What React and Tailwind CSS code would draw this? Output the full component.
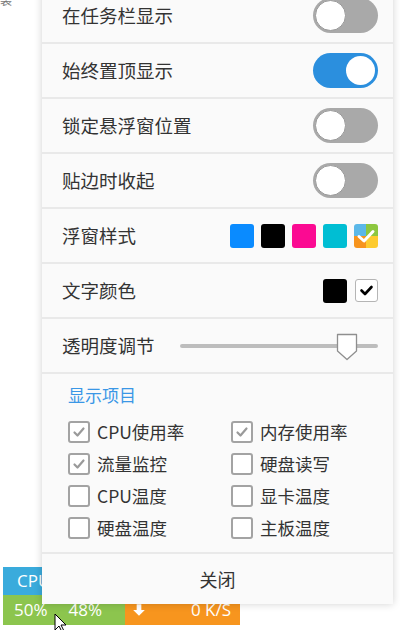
import React from "react";

const font = { fontFamily: '"Noto Sans CJK SC", "Noto Sans", sans-serif' };

function Toggle({ on }) {
  return on ? (
    <div className="w-[65px] h-[35px] rounded-full bg-[#2b8fde] p-[3px] flex justify-end">
      <div className="w-[29px] h-[29px] rounded-full bg-white" />
    </div>
  ) : (
    <div className="w-[65px] h-[35px] rounded-full bg-[#a9a9a9] p-[2px] flex justify-start">
      <div className="w-[31px] h-[31px] rounded-full bg-white border border-[#9a9a9a]" />
    </div>
  );
}

function Row({ label, children }) {
  return (
    <div className="h-[55px] border-b-2 border-[#e9e9e9] flex items-center justify-between pl-[20px] pr-[15px]">
      <span className="text-[18.5px] text-[#333]" style={font}>{label}</span>
      {children}
    </div>
  );
}

function Check({ checked, label }) {
  return (
    <div className="flex items-center gap-[7px] h-[32px]">
      <div className="w-[22px] h-[22px] border-2 border-[#a3a3a3] rounded-[3px] bg-white flex items-center justify-center">
        {checked && (
          <svg width="14" height="14" viewBox="0 0 14 14">
            <polyline points="2.5,7.5 5.5,10.5 11.5,3.5" fill="none" stroke="#9a9a9a" strokeWidth="2.2" strokeLinecap="round" strokeLinejoin="round" />
          </svg>
        )}
      </div>
      <span className="text-[17.5px] text-[#333] leading-none" style={font}>{label}</span>
    </div>
  );
}

export default function App() {
  return (
    <div className="relative w-[400px] h-[630px] overflow-hidden bg-white">
      <span className="absolute left-0 top-[-9px] text-[12px] text-[#777]" style={font}>袋</span>

      {/* floating monitor widget behind */}
      <div className="absolute left-[3px] top-[567px] w-[237px] flex flex-col text-white" style={{ fontFamily: '"Open Sans", sans-serif' }}>
        <div className="h-[28px] bg-[#3aabdc] flex items-center pl-[14px] text-[17px]">CPU</div>
        <div className="h-[30px] flex text-[17px]">
          <div className="w-[122px] bg-[#8cc54e] flex items-center pl-[11px] gap-[21px]">
            <span>50%</span>
            <span>48%</span>
          </div>
          <div className="flex-1 bg-[#f7951e] flex items-center justify-between pl-[7px] pr-[9px]">
            <svg width="14" height="14" viewBox="0 0 12 12">
              <path d="M4 1 H8 V6 H11 L6 11 L1 6 H4 Z" fill="white" />
            </svg>
            <span>0 K/S</span>
          </div>
        </div>
      </div>
      <svg className="absolute left-[54px] top-[613px]" width="14" height="20" viewBox="0 0 14 20">
        <path d="M1 1 L1 17 L5 13 L8 19 L10 18 L7 12 L12 12 Z" fill="white" stroke="black" strokeWidth="1" strokeLinejoin="round" />
      </svg>

      {/* settings panel */}
      <div className="absolute left-[42px] top-[-11px] w-[351px] bg-[#fafafa] shadow-[0_0_8px_rgba(0,0,0,0.18)]">
        <Row label="在任务栏显示"><Toggle on={false} /></Row>
        <Row label="始终置顶显示"><Toggle on={true} /></Row>
        <Row label="锁定悬浮窗位置"><Toggle on={false} /></Row>
        <Row label="贴边时收起"><Toggle on={false} /></Row>
        <Row label="浮窗样式">
          <div className="flex gap-[7px]">
            <div className="w-[24px] h-[24px] rounded-[3px] bg-[#0a8bff]" />
            <div className="w-[24px] h-[24px] rounded-[3px] bg-black" />
            <div className="w-[24px] h-[24px] rounded-[3px] bg-[#fb0a92]" />
            <div className="w-[24px] h-[24px] rounded-[3px] bg-[#00bed3]" />
            <div className="relative w-[24px] h-[24px] rounded-[3px] overflow-hidden grid grid-cols-2 grid-rows-2">
              <div className="bg-[#5bb8e8]" />
              <div className="bg-[#8dc73f]" />
              <div className="bg-[#f7941d]" />
              <div className="bg-[#fdcb2e]" />
              <svg className="absolute left-0 top-0" width="24" height="24" viewBox="0 0 24 24">
                <polyline points="5,12.5 10,17 19,7.5" fill="none" stroke="white" strokeWidth="3" strokeLinecap="round" strokeLinejoin="round" />
              </svg>
            </div>
          </div>
        </Row>
        <Row label="文字颜色">
          <div className="flex gap-[8px]">
            <div className="w-[24px] h-[24px] rounded-[3px] bg-black" />
            <div className="w-[23px] h-[23px] rounded-[3px] bg-white border border-[#b5b5b5] flex items-center justify-center">
              <svg width="15" height="15" viewBox="0 0 15 15">
                <polyline points="2.5,7.5 6,11 12.5,4" fill="none" stroke="black" strokeWidth="2.6" strokeLinecap="round" strokeLinejoin="round" />
              </svg>
            </div>
          </div>
        </Row>
        <Row label="透明度调节">
          <div className="relative w-[198px] h-[28px] flex items-center">
            <div className="w-full h-[4px] rounded-full bg-[#bdbdbd]" />
            <svg className="absolute left-[156px] top-[1px]" width="22" height="28" viewBox="0 0 22 28">
              <path d="M1.5 1.5 H20.5 V18 L11 26.5 L1.5 18 Z" fill="white" stroke="#8f8f8f" strokeWidth="1.3" strokeLinejoin="round" />
            </svg>
          </div>
        </Row>
        <div className="pl-[26px] pt-[12px] pb-[8px] border-b-2 border-[#e9e9e9]">
          <div className="text-[17px] text-[#3a97e6] leading-none mb-[13px]" style={font}>显示项目</div>
          <div className="grid grid-cols-[163px_1fr]">
            <Check checked label="CPU使用率" />
            <Check checked label="内存使用率" />
            <Check checked label="流量监控" />
            <Check checked={false} label="硬盘读写" />
            <Check checked={false} label="CPU温度" />
            <Check checked={false} label="显卡温度" />
            <Check checked={false} label="硬盘温度" />
            <Check checked={false} label="主板温度" />
          </div>
        </div>
        <div className="h-[50px] flex items-center justify-center text-[18px] text-[#333]" style={font}>关闭</div>
      </div>
    </div>
  );
}
